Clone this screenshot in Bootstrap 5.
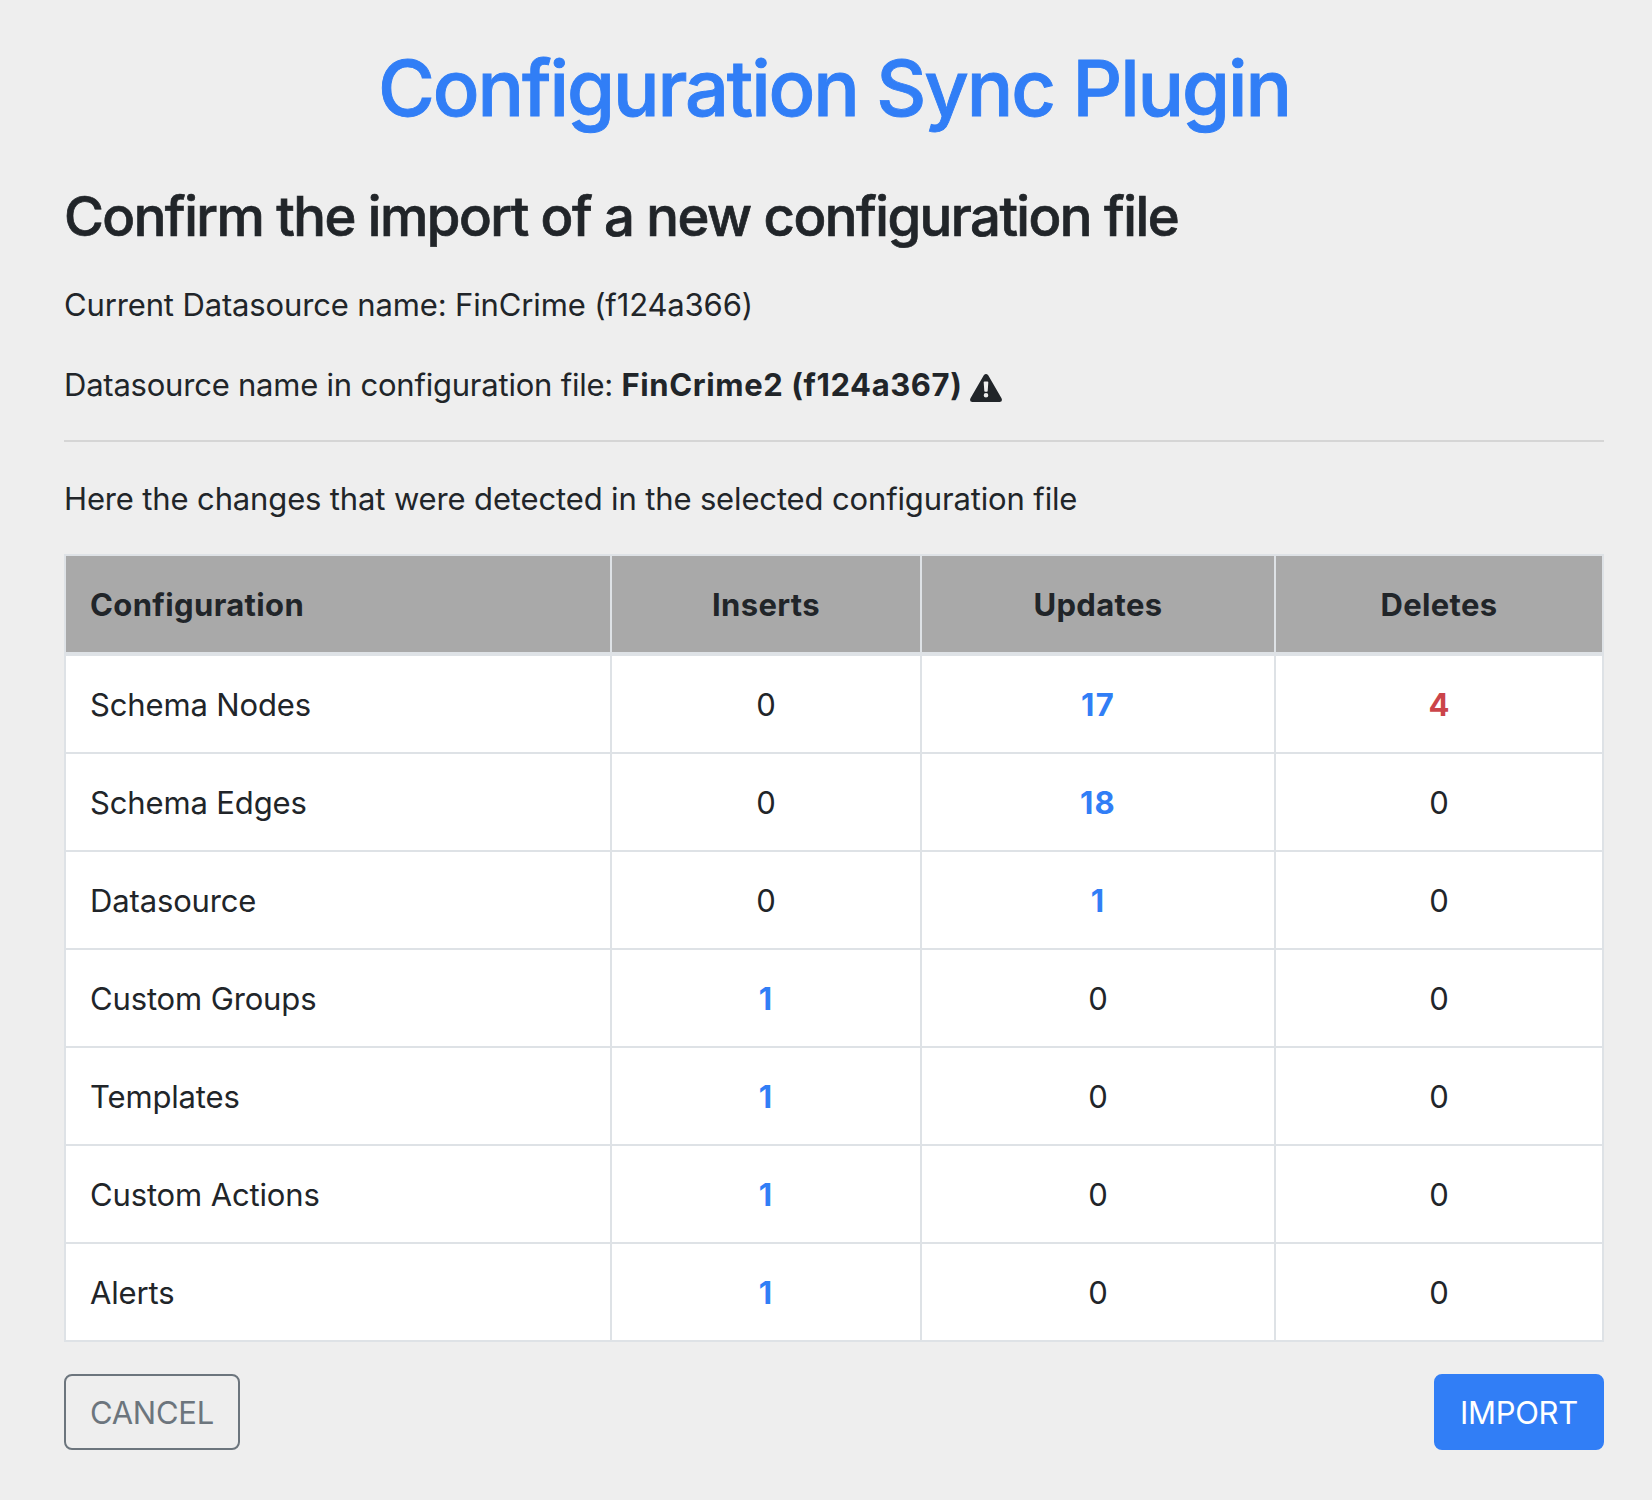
<!DOCTYPE html>
<html lang="en">
<head>
<meta charset="utf-8">
<meta name="viewport" content="width=device-width, initial-scale=1">
<title>Configuration Sync Plugin</title>
<link href="https://cdn.jsdelivr.net/npm/bootstrap@5.3.0/dist/css/bootstrap.min.css" rel="stylesheet">
<style>
  body { background: #eee; color: #212529; font-family: Inter, "Liberation Sans", sans-serif; font-size: 31px; line-height: 48px; letter-spacing: -.14px; }
  .page { padding: 40px 48px 48px 64px; }
  .page-title { font-size: 77.5px; line-height: 96px; font-weight: 500; letter-spacing: -2.1px; -webkit-text-stroke: .9px #317ef6; color: #317ef6; margin-bottom: 47px; }
  .page-subtitle { font-size: 54.4px; line-height: 67px; font-weight: 500; letter-spacing: -1.53px; -webkit-text-stroke: .7px #212529; margin-bottom: 31px; }
  .page p { margin-bottom: 32px; }
  .page .source-file { letter-spacing: -.22px; margin-bottom: 31px; }
  .page .changes-intro { margin-bottom: 31px; }
  .source-file strong { letter-spacing: .6px; }
  .rule { border-top: 2px solid #d5d5d5; opacity: 1; margin: 0 0 33px; }
  .warn-icon { width: 32px; height: 28px; vertical-align: -6px; margin-left: -.7px; }
  .changes { table-layout: fixed; border-collapse: collapse; margin-bottom: 32px; }
  .changes > :not(caption) > * > * { padding: 25px 24px 23px; border: 2px solid #dee2e6; background: #fff; color: #212529; }
  .changes > thead > tr > th { background: #a9a9a9; border-bottom-width: 4px; letter-spacing: .36px; }
  .changes > tbody > tr > td.changed { color: #317ef6; font-weight: 700; letter-spacing: 1.2px; }
  .changes > tbody > tr > td.removed { color: #cb444a; font-weight: 700; }
  .col-name { width: 546px; }
  .col-inserts { width: 310px; }
  .col-updates { width: 354px; }
  .action { font-size: 31px; line-height: 48px; letter-spacing: -.28px; padding: 13px 24px 11px; border-width: 2px; border-radius: 8px; }
  .btn-primary.action { background: #317ef6; border-color: #317ef6; }
  .btn-outline-secondary.action { color: #6c757d; border-color: #6c757d; }
</style>
</head>
<body>
<main class="page">
  <h1 class="page-title text-center">Configuration Sync Plugin</h1>
  <h2 class="page-subtitle">Confirm the import of a new configuration file</h2>
  <p>Current Datasource name: FinCrime (f124a366)</p>
  <p class="source-file">Datasource name in configuration file: <strong>FinCrime2 (f124a367)</strong>
    <svg class="warn-icon" viewBox="0 0 32 28" aria-label="Warning"><path fill="#212529" fill-rule="evenodd" d="M13.8 1.3Q16-1.2 18.2 1.3L31.5 24.2Q33 27.7 29.5 28H2.5Q-1 27.7.5 24.2ZM13.7 8.4L14.3 17Q14.4 17.8 15.1 17.8H16.9Q17.6 17.8 17.7 17L18.3 8.4Q18.3 7.6 17.5 7.6H14.5Q13.7 7.6 13.7 8.4ZM16 19A2.3 2.3 0 1 0 16 23.6A2.3 2.3 0 1 0 16 19Z"/></svg>
  </p>
  <hr class="rule">
  <p class="changes-intro">Here the changes that were detected in the selected configuration file</p>
  <table class="table changes">
    <colgroup><col class="col-name"><col class="col-inserts"><col class="col-updates"><col></colgroup>
    <thead>
      <tr><th>Configuration</th><th class="text-center">Inserts</th><th class="text-center">Updates</th><th class="text-center">Deletes</th></tr>
    </thead>
    <tbody class="text-center">
      <tr><td class="text-start">Schema Nodes</td><td>0</td><td class="changed">17</td><td class="removed">4</td></tr>
      <tr><td class="text-start">Schema Edges</td><td>0</td><td class="changed">18</td><td>0</td></tr>
      <tr><td class="text-start">Datasource</td><td>0</td><td class="changed">1</td><td>0</td></tr>
      <tr><td class="text-start">Custom Groups</td><td class="changed">1</td><td>0</td><td>0</td></tr>
      <tr><td class="text-start">Templates</td><td class="changed">1</td><td>0</td><td>0</td></tr>
      <tr><td class="text-start">Custom Actions</td><td class="changed">1</td><td>0</td><td>0</td></tr>
      <tr><td class="text-start">Alerts</td><td class="changed">1</td><td>0</td><td>0</td></tr>
    </tbody>
  </table>
  <div class="d-flex justify-content-between">
    <button type="button" class="btn btn-outline-secondary action">CANCEL</button>
    <button type="button" class="btn btn-primary action">IMPORT</button>
  </div>
</main>
<script src="https://cdn.jsdelivr.net/npm/bootstrap@5.3.0/dist/js/bootstrap.bundle.min.js"></script>
</body>
</html>
